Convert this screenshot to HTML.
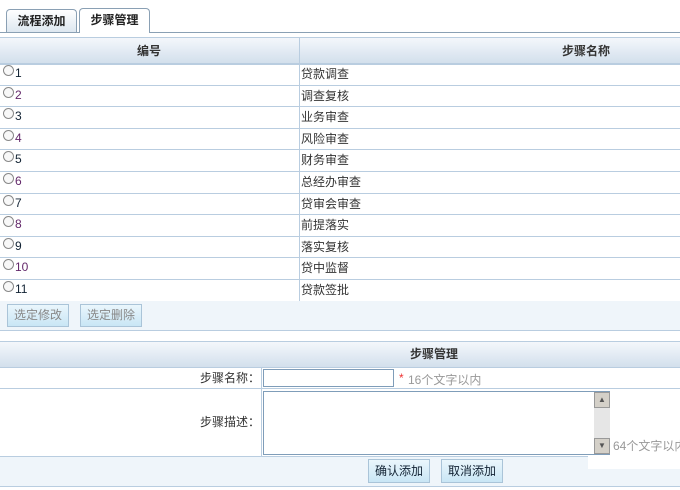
<!DOCTYPE html><html><head><meta charset="utf-8"><style>
*{margin:0;padding:0;box-sizing:border-box}
body{width:680px;height:490px;overflow:hidden;background:#fff;font:12px "Liberation Sans","Noto Sans CJK SC",sans-serif;color:#333;position:relative}
.a{position:absolute;white-space:nowrap}
.hd{background:linear-gradient(#f4f7fb,#e3ebf4 50%,#d3e0ec);border-top:1px solid #b9cde0;border-bottom:1px solid #b9cde0;font-weight:bold;color:#222}
.tab{border:1px solid #8aa0b4;border-bottom:none;border-radius:4px 4px 0 0;font-weight:bold;text-align:center;color:#222;font-size:12px}
.row{left:0;width:680px;height:22px;border-bottom:1px solid #b9cde0}
.rad{left:3px;width:11px;height:11px;border:1px solid #888;border-radius:50%;background:#f8f8f8}
.btn{border:1px solid #aac4d8;background:linear-gradient(#eaf6fc,#c9e6f5);color:#888;text-align:center;line-height:20px;font-size:12px}
.btn2{color:#123}
</style></head><body>
<div class="a tab" style="left:6px;top:9px;width:71px;height:23px;background:linear-gradient(#fff,#dde7f0);line-height:22px">流程添加</div>
<div class="a tab" style="left:79px;top:8px;width:71px;height:25px;background:#fff;line-height:22px;z-index:2">步骤管理</div>
<div class="a" style="left:0;top:32px;width:680px;height:1px;background:#8aa0b4"></div>
<div class="a hd" style="left:0;top:37px;width:680px;height:27px"></div>
<div class="a" style="left:299px;top:37px;width:1px;height:264px;background:#b9cde0"></div>
<div class="a" style="left:137px;top:42px;font-weight:bold">编号</div>
<div class="a" style="left:562px;top:42px;font-weight:bold">步骤名称</div>
<div class="a" style="left:0;top:64px;width:680px;border-bottom:1px solid #b9cde0"></div>
<div id="rows"></div>
<script>
var n=["贷款调查","调查复核","业务审查","风险审查","财务审查","总经办审查","贷审会审查","前提落实","落实复核","贷中监督","贷款签批"],h="";
for(var i=0;i<11;i++){var t=64+i*21.6;h+='<div class="a row" style="top:'+t+'px;height:21.6px"></div><div class="a rad" style="top:'+(t+1)+'px"></div><div class="a" style="left:15px;top:'+(t+2)+'px;color:'+(i%2?'#63286a':'#123')+'">'+(i+1)+'</div><div class="a" style="left:301px;top:'+(t+1)+'px">'+n[i]+'</div>';}
document.getElementById('rows').innerHTML=h;
</script>
<div class="a" style="left:0;top:301px;width:680px;height:30px;background:#eff5fa;border-bottom:1px solid #b9cde0"></div>
<div class="a btn" style="left:7px;top:304px;width:62px;height:23px">选定修改</div>
<div class="a btn" style="left:80px;top:304px;width:62px;height:23px">选定删除</div>
<div class="a hd" style="left:0;top:341px;width:680px;height:27px"></div>
<div class="a" style="left:410px;top:345px;font-weight:bold">步骤管理</div>
<div class="a" style="left:0;top:388px;width:680px;height:1px;background:#b9cde0"></div>
<div class="a" style="left:261px;top:368px;width:1px;height:88px;background:#b9cde0"></div>
<div class="a" style="left:200px;top:369px">步骤名称：</div>
<div class="a" style="left:200px;top:413px">步骤描述：</div>
<div class="a" style="left:263px;top:369px;width:131px;height:18px;border:1px solid #7f9db9"></div>
<div class="a" style="left:399px;top:371px;color:#e33">*</div>
<div class="a" style="left:408px;top:371px;color:#999">16个文字以内</div>
<div class="a" style="left:263px;top:391px;width:347px;height:64px;border:1px solid #7f9db9"></div>
<div class="a" style="left:594px;top:392px;width:16px;height:62px;background:#e6e6e6"></div>
<div class="a" style="left:594px;top:392px;width:16px;height:16px;background:#d4d0c8;border:1px solid #999;font-size:8px;text-align:center;line-height:14px;color:#555">▲</div>
<div class="a" style="left:594px;top:438px;width:16px;height:16px;background:#d4d0c8;border:1px solid #999;font-size:8px;text-align:center;line-height:14px;color:#555">▼</div>
<div class="a" style="left:0;top:456px;width:680px;height:31px;background:#eff5fa;border-top:1px solid #b9cde0;border-bottom:1px solid #b9cde0"></div>
<div class="a" style="left:588px;top:455px;width:92px;height:14px;background:#fff"></div>
<div class="a" style="left:613px;top:437px;color:#999">64个文字以内</div>
<div class="a btn btn2" style="left:368px;top:459px;width:62px;height:24px;line-height:22px">确认添加</div>
<div class="a btn btn2" style="left:441px;top:459px;width:62px;height:24px;line-height:22px">取消添加</div>
</body></html>
